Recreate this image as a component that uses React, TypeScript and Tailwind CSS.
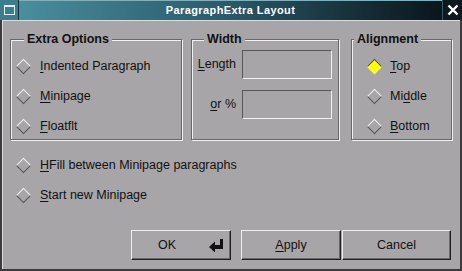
const font = "font-['Liberation_Sans',Arial,sans-serif]";

function Diamond({ on = false }: { on?: boolean }) {
  return (
    <span className="flex items-center justify-center w-[16px] h-[16px] shrink-0">
      <span
        className={`block w-[11px] h-[11px] rotate-45 border ${
          on
            ? "bg-[#ffff00] border-t-[#4a4a4a] border-l-[#4a4a4a] border-b-[#e8e8e8] border-r-[#e8e8e8]"
            : "border-t-[#f2f2f2] border-l-[#f2f2f2] border-b-[#555] border-r-[#555]"
        }`}
      />
    </span>
  );
}

function Mn({ pre = "", u, post }: { pre?: string; u: string; post: string }) {
  return (
    <span>
      {pre}
      <span className="underline underline-offset-2">{u}</span>
      {post}
    </span>
  );
}

function Radio({ on, children, gap = "gap-[9px]" }: { on?: boolean; children: React.ReactNode; gap?: string }) {
  return (
    <div className={`flex items-center h-[30px] ${gap}`}>
      <Diamond on={on} />
      <span className="text-[12.5px] text-[#111]">{children}</span>
    </div>
  );
}

function Group({ title, titleLeft, className, children }: { title: string; titleLeft: string; className: string; children: React.ReactNode }) {
  return (
    <div className={`relative border border-[#6a676a] shadow-[inset_1px_1px_0_#f0f0f0,1px_1px_0_#f0f0f0] ${className}`}>
      <span className={`absolute -top-[9px] ${titleLeft} px-[3px] bg-[#a8a5a8] text-[12.5px] font-bold leading-[16px] text-[#111]`}>
        {title}
      </span>
      {children}
    </div>
  );
}

function Field() {
  return (
    <div className="w-[90px] h-[29px] border border-t-[#5a575a] border-l-[#5a575a] border-b-[#f0f0f0] border-r-[#f0f0f0]" />
  );
}

function Button({ className, children }: { className: string; children: React.ReactNode }) {
  return (
    <div
      className={`h-[30px] flex items-center border border-t-[#eeeeee] border-l-[#eeeeee] border-b-[#202020] border-r-[#202020] shadow-[inset_-1px_-1px_0_#6a676a] text-[12.5px] text-[#111] ${className}`}
    >
      {children}
    </div>
  );
}

export default function App() {
  return (
    <div className={`w-[462px] h-[271px] flex flex-col bg-[#a8a5a8] ${font}`}>
      {/* title bar */}
      <div className="h-[20px] flex shrink-0 bg-[#0c1c24]">
        <div className="w-[19px] flex items-center justify-center bg-[#3c7c8c] border-r border-[#1a3038]">
          <span className="block w-[11px] h-[10px] border border-[#dfeef2] border-t-2 bg-[#3c7c8c]" />
        </div>
        <div className="flex-1 flex items-center justify-center bg-gradient-to-r from-[#4a8e9e] via-[#2a5868] to-[#0a161c] border-t border-[#7fb0bc]">
          <span className="text-white font-bold text-[11px] tracking-[0.4px]">
            ParagraphExtra Layout
          </span>
        </div>
        <div className="w-[20px] flex items-center justify-center bg-[#0c1a20] border-l border-[#3a5560]">
          <svg viewBox="0 0 12 12" className="w-[12px] h-[12px]">
            <path d="M1.5 1.5 L10.5 10.5 M10.5 1.5 L1.5 10.5" stroke="#fff" strokeWidth={2.4} />
          </svg>
        </div>
      </div>

      {/* body */}
      <div className="flex-1 flex flex-col border-l-2 border-r-2 border-b-2 border-[#3c3a3c] shadow-[inset_1px_1px_0_#dcdcdc]">
        <div className="flex mt-[19px] ml-[8px] h-[101px]">
          <Group title="Extra Options" titleLeft="left-[13px]" className="w-[172px] pt-[11px] pl-[4px]">
            <Radio><Mn u="I" post="ndented Paragraph" /></Radio>
            <Radio><Mn u="M" post="inipage" /></Radio>
            <Radio><Mn u="F" post="loatflt" /></Radio>
          </Group>
          <Group title="Width" titleLeft="left-[12px]" className="ml-[9px] w-[148px] pt-[10px] flex flex-col gap-[11px]">
            <div className="flex items-center gap-[6px]">
              <span className="w-[44px] text-right text-[12.5px] text-[#111]"><Mn u="L" post="ength" /></span>
              <Field />
            </div>
            <div className="flex items-center gap-[6px]">
              <span className="w-[44px] text-right text-[12.5px] text-[#111]"><Mn u="o" post="r %" /></span>
              <Field />
            </div>
          </Group>
          <Group title="Alignment" titleLeft="left-[2px]" className="ml-[12px] w-[101px] pt-[11px] pl-[14px]">
            <Radio on gap="gap-[8px]"><Mn u="T" post="op" /></Radio>
            <Radio gap="gap-[8px]"><Mn pre="Mi" u="d" post="dle" /></Radio>
            <Radio gap="gap-[8px]"><Mn u="B" post="ottom" /></Radio>
          </Group>
        </div>

        <div className="mt-[10px] pl-[13px]">
          <Radio><Mn u="H" post="Fill between Minipage paragraphs" /></Radio>
          <Radio><Mn u="S" post="tart new Minipage" /></Radio>
        </div>

        <div className="flex mt-[20px] ml-[129px]">
          <Button className="w-[100px] pl-[26px] pr-[6px] justify-between">
            <span>OK</span>
            <svg viewBox="0 0 15 13" className="w-[15px] h-[13px]">
              <path d="M0 8 L6 2.5 L6 6 L11 6 L11 0 L14 0 L14 10 L6 10 L6 13.5 Z" fill="#111" />
            </svg>
          </Button>
          <Button className="ml-[10px] w-[100px] justify-center"><Mn u="A" post="pply" /></Button>
          <Button className="ml-[1px] w-[109px] justify-center">Cancel</Button>
        </div>
      </div>
    </div>
  );
}
